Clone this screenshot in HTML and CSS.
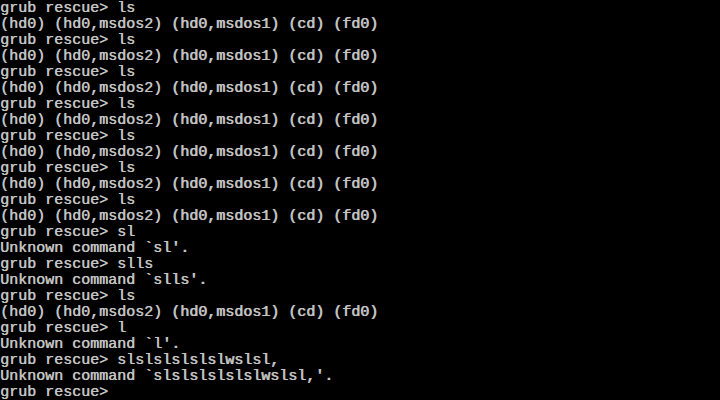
FILE: index.html
```html
<!DOCTYPE html>
<html>
<head>
<meta charset="utf-8">
<link rel="stylesheet" href="styles.css">
</head>
<body>
<pre class="console">grub rescue&gt; ls
(hd0) (hd0,msdos2) (hd0,msdos1) (cd) (fd0)
grub rescue&gt; ls
(hd0) (hd0,msdos2) (hd0,msdos1) (cd) (fd0)
grub rescue&gt; ls
(hd0) (hd0,msdos2) (hd0,msdos1) (cd) (fd0)
grub rescue&gt; ls
(hd0) (hd0,msdos2) (hd0,msdos1) (cd) (fd0)
grub rescue&gt; ls
(hd0) (hd0,msdos2) (hd0,msdos1) (cd) (fd0)
grub rescue&gt; ls
(hd0) (hd0,msdos2) (hd0,msdos1) (cd) (fd0)
grub rescue&gt; ls
(hd0) (hd0,msdos2) (hd0,msdos1) (cd) (fd0)
grub rescue&gt; sl
Unknown command `sl'.
grub rescue&gt; slls
Unknown command `slls'.
grub rescue&gt; ls
(hd0) (hd0,msdos2) (hd0,msdos1) (cd) (fd0)
grub rescue&gt; l
Unknown command `l'.
grub rescue&gt; slslslslslslwslsl,
Unknown command `slslslslslslwslsl,'.
grub rescue&gt;</pre>
</body>
</html>
```
FILE: styles.css
```css
html, body {
  margin: 0;
  padding: 0;
  background: #000;
  width: 720px;
  height: 400px;
  overflow: hidden;
}
.console {
  margin: 0;
  padding: 1px 0 0 0;
  font-family: "Liberation Mono", monospace;
  font-size: 15px;
  line-height: 16px;
  font-weight: normal;
  color: #c4c4c4;
  text-shadow: 0.6px 0 0 #c4c4c4;
  white-space: pre;
}
```
